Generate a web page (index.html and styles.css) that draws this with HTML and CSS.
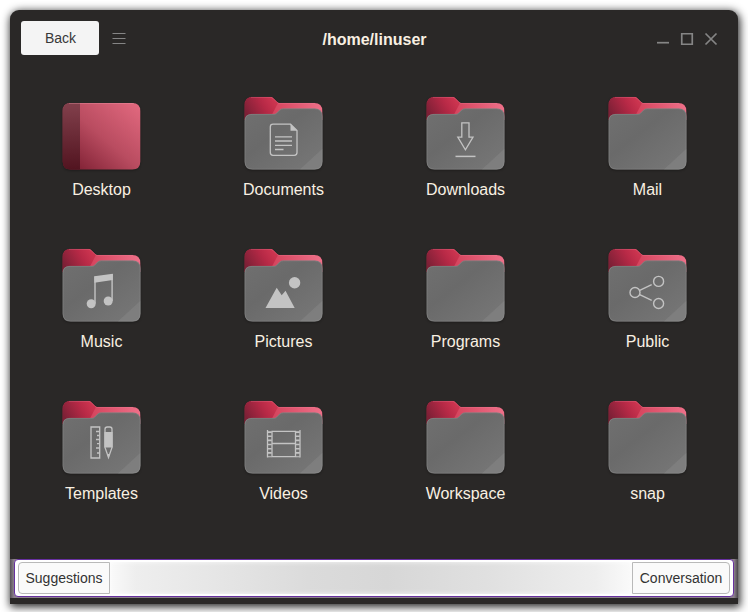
FILE: index.html
```html
<!DOCTYPE html>
<html lang="en">
<head>
<meta charset="utf-8">
<title>/home/linuser</title>
<link rel="stylesheet" href="styles.css">
</head>
<body>
<svg class="defs" width="0" height="0" aria-hidden="true">
  <defs>
    <linearGradient id="tab" gradientUnits="userSpaceOnUse" x1="65" y1="114" x2="90" y2="99"><stop offset="0" stop-color="#7d2036"/><stop offset=".65" stop-color="#b72946"/><stop offset="1" stop-color="#cb344f"/></linearGradient>
    <linearGradient id="rim" x1="0" x2="1"><stop offset="0" stop-color="#c02c48"/><stop offset=".45" stop-color="#d94a63"/><stop offset="1" stop-color="#ee7089"/></linearGradient>
    <linearGradient id="front" x1="0" y1="0" x2="1" y2="1"><stop offset="0" stop-color="#707070"/><stop offset=".4" stop-color="#6a6a6a"/><stop offset="1" stop-color="#787878"/></linearGradient>
    <linearGradient id="desk" x1="0" y1="1" x2="1" y2="0"><stop offset="0" stop-color="#74182b"/><stop offset=".5" stop-color="#b94c60"/><stop offset="1" stop-color="#e36a80"/></linearGradient>
    <linearGradient id="dock" x1="0" y1="1" x2="0" y2="0"><stop offset="0" stop-color="#521420"/><stop offset="1" stop-color="#82404c"/></linearGradient>
    <g id="folder">
      <path d="M62.700 120v-15q0-8 8-8h17.800q1.500 0 2.500 1l4 4q1 1 2.500 1h34.800q8 0 8 8v9z" fill="url(#rim)"/>
      <path d="M62.700 120v-15q0-8 8-8h17.800q1.500 0 2.500 1l5 5-6 11.500z" fill="url(#tab)"/>
      <path d="M69 97.400h19.500q1.400 0 2.500 1l4 4q1 1 2.500 1H133" fill="none" stroke="#ee829b" stroke-opacity=".4" stroke-width=".8"/>
      <path d="M62.600 121q0-7 7-7H92q1.500 0 2.500-1l3.200-3.200q1.500-1.400 3.500-1.400h31.300q8 0 8 8v45.200q0 8-8 8H70.600q-8 0-8-8z" fill="url(#front)"/>
      <path d="M118 169.300L140.200 149v12.800q0 7.500-7.500 7.500z" fill="#838383" fill-opacity=".6"/>
      <path d="M63 121q0-6.700 7-6.700H92q1.500 0 2.500-1l3.200-3.200q1.500-1.300 3.500-1.300h31.300q7.600 0 7.600 7.600v45.200q0 7.600-7.600 7.600H70.600q-7.600 0-7.600-7.600z" fill="none" stroke="#a0a0a0" stroke-opacity=".42" stroke-width=".8"/>
    </g>
  </defs>
</svg>
<div class="window">
  <header class="titlebar">
    <div class="left">
      <button class="back">Back</button>
      <svg class="menu" width="14" height="14" viewBox="0 0 14 14"><path d="M.5 1.500h13M.5 6.500h13M.5 11.500h13" stroke="#858585" fill="none"/></svg>
    </div>
    <h1 class="title">/home/linuser</h1>
    <svg class="controls" width="62" height="14" viewBox="656 32 62 14" fill="none" stroke="#858585" stroke-width="1.700"><path d="M657 42.700h12"/><path d="M681.750 33.750h10.500v10.500h-10.500z"/><path d="M705.500 33.500l11 11M716.500 33.500l-11 11"/></svg>
  </header>
  <main class="files">
    <div class="file"><svg class="icon" viewBox="61 96 80 76"><path d="M62.700 111q0-8 8-8h61.600q8 0 8 8v50.500q0 8-8 8H70.700q-8 0-8-8z" fill="url(#desk)"/><path d="M80 103h-9.300q-8 0-8 8v50.500q0 8 8 8H80z" fill="url(#dock)"/><path d="M69 103.400h65" stroke="#f09aab" stroke-opacity=".5" stroke-width=".8"/></svg><span>Desktop</span></div>

    <div class="file"><svg class="icon" viewBox="61 96 80 76"><use href="#folder"/><g fill="none" stroke="#c3c3c3" stroke-width="1.300"><path d="M108.500 124.200H91q-2.700 0-2.700 2.700v25.700q0 2.700 2.700 2.700h21.300q2.700 0 2.700-2.700V130.500z"/><path d="M93 136.800h17M93 141h17M93 145.300h17M93 149.500h8.500"/></g><path d="M108.500 124v6.700h6.700z" fill="#c3c3c3"/></svg><span>Documents</span></div>

    <div class="file"><svg class="icon" viewBox="61 96 80 76"><use href="#folder"/><g fill="none" stroke="#c3c3c3" stroke-width="1.300"><path d="M97.800 122.800h7.200v14.400h4l-7.600 12.600-7.600-12.600h4z"/><path d="M91.500 156.400h20" stroke-width="1.500"/></g></svg><span>Downloads</span></div>

    <div class="file"><svg class="icon" viewBox="61 96 80 76"><use href="#folder"/></svg><span>Mail</span></div>

    <div class="file"><svg class="icon" viewBox="61 248 80 76"><use href="#folder" y="152"/><g fill="#c3c3c3"><path d="M94.300 276.200l18.500-2.500v6.300l-18.500 2.800z"/><circle cx="91.200" cy="303.700" r="4.500"/><circle cx="108.200" cy="301" r="4.500"/></g><path d="M95 276.500v27M112.100 274v27" stroke="#c3c3c3" stroke-width="1.400"/></svg><span>Music</span></div>

    <div class="file"><svg class="icon" viewBox="61 248 80 76"><use href="#folder" y="152"/><path d="M83.500 308l11.200-20.300 5 7.500 3.800-4.500 9.200 17.300z" fill="#c3c3c3"/><circle cx="112.600" cy="282.700" r="5.700" fill="#c3c3c3"/></svg><span>Pictures</span></div>

    <div class="file"><svg class="icon" viewBox="61 248 80 76"><use href="#folder" y="152"/></svg><span>Programs</span></div>

    <div class="file"><svg class="icon" viewBox="61 248 80 76"><use href="#folder" y="152"/><g fill="none" stroke="#c3c3c3" stroke-width="1.400"><circle cx="89" cy="292.500" r="5"/><circle cx="112.600" cy="281.400" r="5"/><circle cx="112.600" cy="303.500" r="5"/><path d="M93.700 290.300l12-5.700M93.700 294.700l12 5.700"/></g></svg><span>Public</span></div>

    <div class="file"><svg class="icon" viewBox="61 400 80 76"><use href="#folder" y="304"/><g fill="none" stroke="#c3c3c3" stroke-width="1.300"><path d="M91 427h8.700v31H91zM96 431.500h3.500M97 435.500h2.500M96 439.500h3.500M97 443.700h2.500M96 448h3.500M97 453h2.500"/><path d="M105 447.500v-18.300q0-2.200 2.200-2.200h2.600q2.200 0 2.200 2.200v18.300l-3.500 10z"/></g><path d="M104.400 432h8.200v15.500h-8.200zM107 454h3l-1.500 4z" fill="#c3c3c3"/></svg><span>Templates</span></div>

    <div class="file"><svg class="icon" viewBox="61 400 80 76"><use href="#folder" y="304"/><g fill="none" stroke="#c3c3c3" stroke-width="1.300"><path d="M85.500 430v27.500M118 430v27.500M90 431.300h23.500v25.400H90zM90 443.500h23.500"/><path d="M87.700 431.300v26M115.800 431.300v26" stroke-width="4" stroke-dasharray="1.600 2.550"/></g></svg><span>Videos</span></div>

    <div class="file"><svg class="icon" viewBox="61 400 80 76"><use href="#folder" y="304"/></svg><span>Workspace</span></div>

    <div class="file"><svg class="icon" viewBox="61 400 80 76"><use href="#folder" y="304"/></svg><span>snap</span></div>
  </main>
  <footer class="strip">
    <div class="bar">
      <button class="suggestions">Suggestions</button>
      <div class="spread"></div>
      <button class="conversation">Conversation</button>
    </div>
  </footer>
</div>
</body>
</html>
```

FILE: styles.css
```css
* { box-sizing: border-box; }
body {
  margin: 0;
  padding: 10px;
  width: 748px;
  height: 612px;
  overflow: hidden;
  background: #fff;
  font-family: "Liberation Sans", Arial, sans-serif;
}
.defs { display: block; height: 0; }
button { font: inherit; font-size: 14px; padding: 0; }
.window {
  width: 728px;
  height: 594px;
  display: flex;
  flex-direction: column;
  background: #2a2827;
  border-radius: 9px 9px 0 0;
  box-shadow: 1px 2px 9px 1px rgba(0, 0, 0, .85);
}
.titlebar {
  height: 58px;
  padding: 0 20px 0 11px;
  display: grid;
  grid-template-columns: 1fr auto 1fr;
  align-items: center;
}
.left { display: flex; align-items: center; gap: 13px; padding-bottom: 2px; }
.back {
  width: 78px;
  height: 34px;
  padding-left: 1px;
  border: 0;
  border-radius: 3px;
  background: #f4f4f4;
  color: #383838;
}
.menu { display: block; margin-top: 1px; }
.title {
  margin: 0;
  padding: 2px 0 0 10px;
  font-size: 16px;
  line-height: 18px;
  font-weight: bold;
  color: #f9f0e2;
}
.controls { justify-self: end; display: block; }
.files {
  height: 491px;
  padding-top: 28px;
  display: grid;
  grid-template-columns: repeat(4, 182px);
  grid-auto-rows: 152px;
}
.file {
  display: flex;
  flex-direction: column;
  align-items: center;
  font-size: 16px;
  line-height: 18px;
  color: #f9f0e2;
}
.file span { padding-left: 1px; }
.icon { width: 80px; height: 76px; display: block; margin-bottom: 9px; filter: drop-shadow(0 1px 1px rgba(0, 0, 0, .3)); }
.strip {
  height: 39px;
  padding: 0 4px;
  background: linear-gradient(90deg, #575257, #8b808b 4px, #8b808b 724px, #4b474b);
}
.bar {
  height: 38px;
  display: flex;
  padding: 2px 3px;
  border: 1px solid #6730a0;
  border-radius: 4px;
  background: #fff;
}
.bar button {
  height: 32px;
  border: 1px solid #b9b9b9;
  background: #fafafa;
  color: #333;
}
.suggestions { width: 92px; border-radius: 4px 0 0 4px; }
.conversation { width: 98px; border-radius: 0 4px 4px 0; }
.spread {
  flex: 1;
  background: linear-gradient(90deg, #fafafa, #eee 5%, #e6e6e6 20%, #dbdbdb 38%, #d7d7d7 53%, #e0e0e0 72%, #eee 93%, #fafafa);
  box-shadow: inset 0 0 5px rgba(255, 255, 255, .8);
}
```
